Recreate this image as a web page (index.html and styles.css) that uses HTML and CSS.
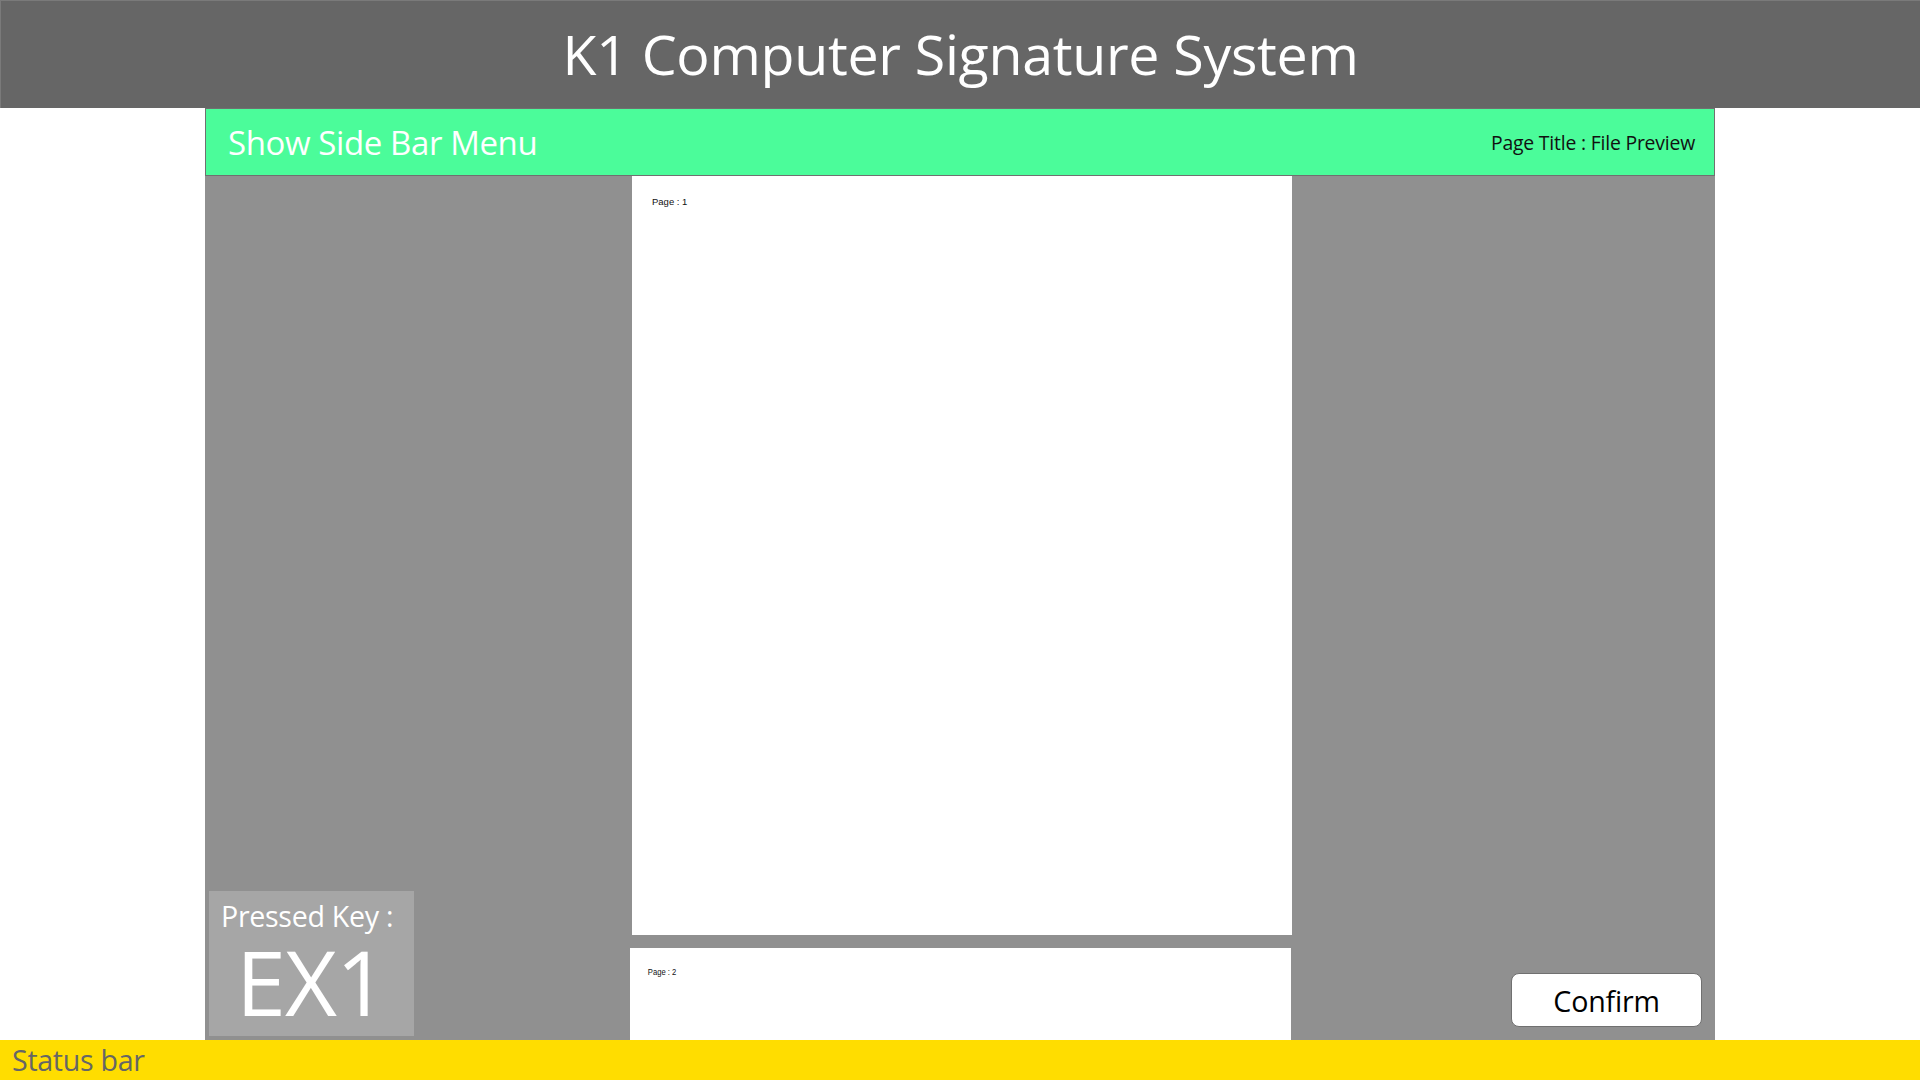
FILE: index.html
```html
<!DOCTYPE html>
<html>
<head>
<meta charset="utf-8">
<link rel="stylesheet" href="styles.css">
</head>
<body>
<div class="app">
  <header class="topbar">
    <h1 class="title">K1 Computer Signature System</h1>
  </header>
  <main class="frame">
    <div class="menubar">
      <span class="menu-link">Show Side Bar Menu</span>
      <span class="page-title">Page Title : File Preview</span>
    </div>
    <div class="content">
      <div class="left-pane">
        <div class="keybox">
          <div class="key-label">Pressed Key :</div>
          <div class="key-value">EX1</div>
        </div>
      </div>
      <div class="pages">
        <div class="page page-one"><span class="page-num">Page : 1</span></div>
        <div class="page page-two"><span class="page-num small">Page : 2</span></div>
      </div>
      <div class="right-pane">
        <button class="confirm">Confirm</button>
      </div>
    </div>
  </main>
  <footer class="statusbar">Status bar</footer>
</div>
</body>
</html>
```
FILE: styles.css
```css
html, body {
  margin: 0;
  padding: 0;
  height: 100%;
  background: #ffffff;
  font-family: "Open Sans", "Noto Sans", "Liberation Sans", sans-serif;
}
.app {
  display: flex;
  flex-direction: column;
  height: 100vh;
  overflow: hidden;
}
.topbar {
  height: 108px;
  flex: 0 0 108px;
  box-sizing: border-box;
  background: #666666;
  border-top: 1px solid #7a7a7a;
  border-left: 1px solid #7a7a7a;
  display: flex;
  align-items: center;
  justify-content: center;
}
.title {
  margin: 0;
  color: #ffffff;
  font-weight: 400;
  font-size: 55.5px;
  letter-spacing: -0.3px;
  line-height: 1;
  padding-bottom: 2px;
}
.frame {
  flex: 1 1 auto;
  width: 1510px;
  margin: 0 auto;
  display: flex;
  flex-direction: column;
  min-height: 0;
}
.menubar {
  flex: 0 0 68px;
  box-sizing: border-box;
  background: #4bfc9a;
  border: 1px solid #707070;
  display: flex;
  align-items: center;
  justify-content: space-between;
  padding: 0 19px 0 22px;
}
.menu-link {
  color: #ffffff;
  font-size: 33px;
  letter-spacing: -0.4px;
}
.page-title {
  color: #111111;
  font-size: 19.4px;
  letter-spacing: -0.2px;
}
.content {
  flex: 1 1 auto;
  min-height: 0;
  background: #909090;
  display: flex;
}
.left-pane {
  flex: 0 0 425px;
  display: flex;
  align-items: flex-end;
  padding: 0 0 4px 4px;
  box-sizing: border-box;
}
.keybox {
  width: 205px;
  height: 145px;
  background: #a6a6a6;
  box-sizing: border-box;
  padding: 8px 0 0 12px;
  color: #ffffff;
}
.key-label {
  font-size: 28.6px;
  line-height: 34px;
  letter-spacing: -0.3px;
}
.key-value {
  font-size: 90px;
  line-height: 90px;
  margin: 3px 0 0 15px;
  letter-spacing: -1px;
}
.pages {
  flex: 0 0 663px;
  display: flex;
  flex-direction: column;
  gap: 13px;
  overflow: hidden;
}
.page {
  background: #ffffff;
  position: relative;
  flex: 0 0 auto;
}
.page-one {
  width: 660px;
  height: 759px;
  margin-left: 2px;
}
.page-two {
  width: 661px;
  height: 200px;
}
.page-num {
  display: block;
  font-family: "Liberation Sans", sans-serif;
  font-size: 9.5px;
  color: #111111;
  padding: 20px 0 0 20px;
}
.page-num.small {
  font-size: 9px;
  transform: scaleX(0.85);
  transform-origin: left top;
  padding: 19px 0 0 21px;
}
.right-pane {
  flex: 1 1 auto;
  display: flex;
  align-items: flex-end;
  justify-content: flex-end;
  padding: 0 13px 13px 0;
}
.confirm {
  width: 191px;
  height: 54px;
  background: #ffffff;
  border: 1px solid #707070;
  border-radius: 8px;
  font-family: "Open Sans", "Noto Sans", sans-serif;
  font-size: 28.6px;
  color: #000000;
  padding: 0;
  letter-spacing: -0.2px;
}
.statusbar {
  flex: 0 0 40px;
  height: 40px;
  background: #ffdd00;
  color: #666666;
  font-size: 28.6px;
  line-height: 40px;
  padding-left: 12px;
  letter-spacing: -0.3px;
}
```
